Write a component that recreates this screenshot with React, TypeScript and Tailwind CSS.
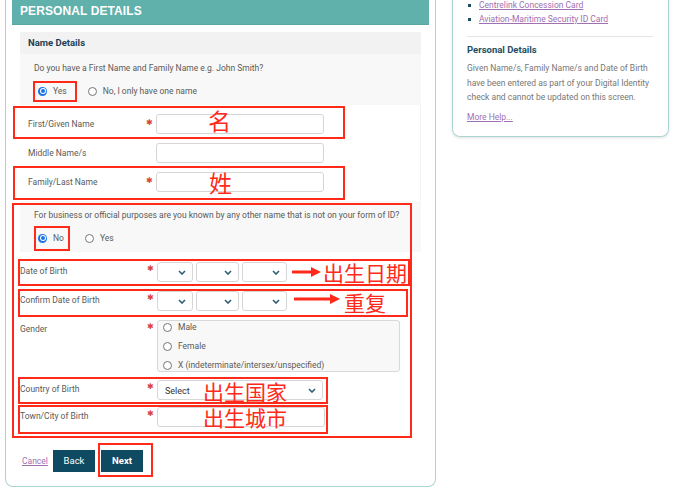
import React from "react";

function Radio({ checked }: { checked?: boolean }) {
  if (checked) {
    return (
      <span className="w-[9px] h-[9px] rounded-full bg-[#1a73e8] flex items-center justify-center shrink-0">
        <span className="w-[6px] h-[6px] rounded-full bg-white flex items-center justify-center">
          <span className="w-[4px] h-[4px] rounded-full bg-[#1a73e8]" />
        </span>
      </span>
    );
  }
  return <span className="w-[9px] h-[9px] rounded-full border border-[#767676] bg-white shrink-0" />;
}

function Option({ checked, label }: { checked?: boolean; label: string }) {
  return (
    <div className="flex items-center gap-[6px]">
      <Radio checked={checked} />
      <span className="text-[8.5px] leading-[12px] text-[#5a5a5a]">{label}</span>
    </div>
  );
}

function Chevron() {
  return (
    <svg width="8" height="5" viewBox="0 0 8 5" className="shrink-0">
      <path d="M1 1 L4 4 L7 1" fill="none" stroke="#2f5d75" strokeWidth="1.6" />
    </svg>
  );
}

function Star() {
  return (
    <span className="block text-[#d8453a] text-[8px] leading-[8px] font-['DejaVu_Sans',sans-serif]">✱</span>
  );
}

function Question({ text, a, b, aChecked }: { text: string; a: string; b: string; aChecked?: boolean }) {
  return (
    <div className="h-[51px] bg-[#f8f8f8] pl-[14px] pt-[8px]">
      <div className="text-[8.5px] leading-[12px] text-[#5a5a5a]">{text}</div>
      <div className="mt-[11px] pl-[4px] h-[12px] flex items-center gap-[21px]">
        <Option checked={aChecked} label={a} />
        <Option label={b} />
      </div>
    </div>
  );
}

function NameRow({ label, required }: { label: string; required?: boolean }) {
  return (
    <div className="h-[20px] flex items-center pl-[8px]">
      <div className="w-[116px] text-[8.5px] leading-[12px] text-[#5a5a5a]">{label}</div>
      <div className="w-[12px] flex items-center pl-[2px] -mt-[3px]">{required && <Star />}</div>
      <div className="w-[168px] h-[20px] border border-[#d6d6d6] rounded-[3px] bg-white" />
    </div>
  );
}

function DateSelects() {
  return (
    <div className="flex gap-[3px]">
      <div className="w-[36px] h-[20px] border border-[#d6d6d6] rounded-[3px] bg-white flex items-center justify-end pr-[6px]">
        <Chevron />
      </div>
      <div className="w-[43px] h-[20px] border border-[#d6d6d6] rounded-[3px] bg-white flex items-center justify-end pr-[6px]">
        <Chevron />
      </div>
      <div className="w-[45px] h-[20px] border border-[#d6d6d6] rounded-[3px] bg-white flex items-center justify-end pr-[6px]">
        <Chevron />
      </div>
    </div>
  );
}

function FieldRow({ label, children, h }: { label: string; children: React.ReactNode; h: string }) {
  return (
    <div className={`flex items-start ${h}`}>
      <div className="w-[124px] text-[8.5px] leading-[12px] text-[#5a5a5a] pt-[3px]">{label}</div>
      <div className="w-[13px] pt-[3px] pl-[3px] flex">
        <Star />
      </div>
      {children}
    </div>
  );
}

export default function App() {
  return (
    <div className="relative w-[678px] h-[489px] bg-white overflow-hidden font-['Roboto',sans-serif] flex items-start">
      {/* Left card */}
      <div className="ml-[5px] w-[431px] h-[487px] border-x border-b border-[#a9d4d2] rounded-b-[8px] px-[6px] flex flex-col">
        <div className="h-[25px] bg-[#60b0ab] pl-[8px] pb-[3px] flex items-center border-b border-[#58a7a2]">
          <span className="font-['Liberation_Sans',sans-serif] font-bold text-[12px] leading-[14px] text-white tracking-[0.1px]">
            PERSONAL DETAILS
          </span>
        </div>

        <div className="mx-[8px] mt-[7px] flex flex-col">
          {/* Name Details section */}
          <div className="h-[22px] bg-[#f2f2f2] pl-[8px] flex items-center">
            <span className="text-[9.5px] font-bold text-[#1d3f55]">Name Details</span>
          </div>
          <Question
            text="Do you have a First Name and Family Name e.g. John Smith?"
            a="Yes"
            b="No, I only have one name"
            aChecked
          />
          <div className="bg-white flex flex-col gap-[9px] pt-[9px] pb-[9px] border-r border-[#f2f2f2]">
            <NameRow label="First/Given Name" required />
            <NameRow label="Middle Name/s" />
            <NameRow label="Family/Last Name" required />
          </div>
          <Question
            text="For business or official purposes are you known by any other name that is not on your form of ID?"
            a="No"
            b="Yes"
            aChecked
          />

          {/* Other fields */}
          <div className="mt-[10px] flex flex-col">
            <FieldRow label="Date of Birth" h="h-[29px]">
              <DateSelects />
            </FieldRow>
            <FieldRow label="Confirm Date of Birth" h="h-[29px]">
              <DateSelects />
            </FieldRow>
            <FieldRow label="Gender" h="h-[60px]">
              <div className="w-[243px] h-[52px] border border-[#d8d8d8] rounded-[3px] bg-[#f8f8f8] pl-[5px] flex flex-col gap-[7px]">
                <div className="h-[12px] flex items-center">
                  <Option label="Male" />
                </div>
                <div className="h-[12px] flex items-center">
                  <Option label="Female" />
                </div>
                <div className="h-[12px] flex items-center">
                  <Option label="X (indeterminate/intersex/unspecified)" />
                </div>
              </div>
            </FieldRow>
            <FieldRow label="Country of Birth" h="h-[27px]">
              <div className="w-[166px] h-[20px] border border-[#d6d6d6] rounded-[3px] bg-white flex items-center justify-between pl-[7px] pr-[6px]">
                <span className="text-[9px] leading-[12px] text-[#333] mt-[2px]">Select</span>
                <Chevron />
              </div>
            </FieldRow>
            <FieldRow label="Town/City of Birth" h="h-[20px]">
              <div className="w-[168px] h-[20px] border border-[#d6d6d6] rounded-[3px] bg-white" />
            </FieldRow>
          </div>

          {/* Buttons */}
          <div className="mt-[23px] pl-[2px] flex items-center">
            <span className="text-[8.5px] text-[#a070b0] underline w-[31px]">Cancel</span>
            <div className="w-[42px] h-[22px] bg-[#0e4a62] flex items-center justify-center text-white text-[9.5px]">
              Back
            </div>
            <div className="ml-[6px] w-[42px] h-[22px] bg-[#0e4a62] flex items-center justify-center text-white text-[9.5px] font-bold">
              Next
            </div>
          </div>
        </div>
      </div>

      {/* Right card */}
      <div className="ml-[16px] -mt-[2px] w-[217px] h-[139px] border-x border-b border-[#a9d4d2] rounded-b-[8px] shadow-[0_1px_3px_rgba(0,0,0,0.12)] pl-[14px] pr-[15px] flex flex-col">
        <ul className="flex flex-col">
          {["Centrelink Concession Card", "Aviation-Maritime Security ID Card"].map((t) => (
            <li key={t} className="h-[14px] flex items-center pl-[1px] gap-[8px]">
              <span className="w-[3px] h-[3px] bg-[#1e4d63]" />
              <span className="text-[8.5px] leading-[12px] text-[#a070b0] underline">{t}</span>
            </li>
          ))}
        </ul>
        <div className="mt-[10px] border-t border-[#e4e4e4]" />
        <div className="mt-[6px] h-[14px] flex items-center text-[9.5px] font-bold text-[#1e4d63]">Personal Details</div>
        <div className="mt-[4px] text-[8.5px] leading-[14.5px] text-[#777]">
          Given Name/s, Family Name/s and Date of Birth have been entered as part of your Digital Identity check and cannot be updated on this screen.
        </div>
        <div className="mt-[6px] h-[14px] flex items-center">
          <span className="text-[8.5px] text-[#a070b0] underline">More Help...</span>
        </div>
      </div>

      {/* Red annotation overlay */}
      <div className="absolute inset-0 pointer-events-none">
        <div className="absolute left-[33px] top-[81px] w-[44px] h-[21px] border-2 border-[#ff2a1a]" />
        <div className="absolute left-[13px] top-[106px] w-[332px] h-[33px] border-2 border-[#ff2a1a]" />
        <div className="absolute left-[13px] top-[166px] w-[332px] h-[34px] border-2 border-[#ff2a1a]" />
        <div className="absolute left-[12px] top-[203px] w-[400px] h-[235px] border-2 border-[#ff2a1a]" />
        <div className="absolute left-[34px] top-[226px] w-[36px] h-[25px] border-2 border-[#ff2a1a]" />
        <div className="absolute left-[18px] top-[259px] w-[392px] h-[27px] border-2 border-[#ff2a1a]" />
        <div className="absolute left-[18px] top-[289px] w-[390px] h-[28px] border-2 border-[#ff2a1a]" />
        <div className="absolute left-[18px] top-[377px] w-[310px] h-[27px] border-2 border-[#ff2a1a]" />
        <div className="absolute left-[18px] top-[405px] w-[310px] h-[29px] border-2 border-[#ff2a1a]" />
        <div className="absolute left-[98px] top-[443px] w-[55px] h-[34px] border-2 border-[#ff2a1a]" />

        <span className="absolute left-[208px] top-[108px] text-[23px] leading-[24px] text-[#ff2a1a] font-['Noto_Sans_CJK_SC',sans-serif]">名</span>
        <span className="absolute left-[209px] top-[170px] text-[23px] leading-[24px] text-[#ff2a1a] font-['Noto_Sans_CJK_SC',sans-serif]">姓</span>
        <span className="absolute left-[323px] top-[262px] text-[21px] leading-[20px] text-[#ff2a1a] font-['Noto_Sans_CJK_SC',sans-serif]">出生日期</span>
        <span className="absolute left-[344px] top-[292px] text-[21px] leading-[20px] text-[#ff2a1a] font-['Noto_Sans_CJK_SC',sans-serif]">重复</span>
        <span className="absolute left-[203px] top-[381px] text-[21px] leading-[20px] text-[#ff2a1a] font-['Noto_Sans_CJK_SC',sans-serif]">出生国家</span>
        <span className="absolute left-[203px] top-[407px] text-[21px] leading-[20px] text-[#ff2a1a] font-['Noto_Sans_CJK_SC',sans-serif]">出生城市</span>

        <svg className="absolute left-[292px] top-[266px]" width="30" height="12" viewBox="0 0 30 12">
          <path d="M0 6 H20" stroke="#ff2a1a" strokeWidth="3" />
          <path d="M19 1 L29 6 L19 11 Z" fill="#ff2a1a" />
        </svg>
        <svg className="absolute left-[294px] top-[293px]" width="47" height="12" viewBox="0 0 47 12">
          <path d="M0 6 H37" stroke="#ff2a1a" strokeWidth="3" />
          <path d="M36 1 L46 6 L36 11 Z" fill="#ff2a1a" />
        </svg>
      </div>
    </div>
  );
}
